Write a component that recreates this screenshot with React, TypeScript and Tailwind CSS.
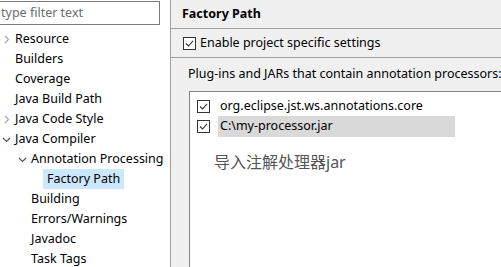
import React from "react";

const font = { fontFamily: '"Noto Sans", "Noto Sans CJK SC", sans-serif' };

function Check() {
  return (
    <svg width="13" height="13" viewBox="0 0 13 13" className="shrink-0">
      <rect x="0.5" y="0.5" width="12" height="12" fill="#fff" stroke="#333" />
      <path d="M3 6.5 L5.5 9 L10 3.8" fill="none" stroke="#333" strokeWidth="1.1" />
    </svg>
  );
}

function Chevron({ down }: { down?: boolean }) {
  return down ? (
    <svg width="9" height="9" viewBox="0 0 9 9" className="shrink-0">
      <path d="M1 3 L4.5 6.5 L8 3" fill="none" stroke="#555" strokeWidth="1.2" />
    </svg>
  ) : (
    <svg width="9" height="9" viewBox="0 0 9 9" className="shrink-0">
      <path d="M3 1 L6.5 4.5 L3 8" fill="none" stroke="#a6a6a6" strokeWidth="1.2" />
    </svg>
  );
}

type Item = { label: string; level: number; chevron?: "right" | "down"; selected?: boolean };

const items: Item[] = [
  { label: "Resource", level: 0, chevron: "right" },
  { label: "Builders", level: 0 },
  { label: "Coverage", level: 0 },
  { label: "Java Build Path", level: 0 },
  { label: "Java Code Style", level: 0, chevron: "right" },
  { label: "Java Compiler", level: 0, chevron: "down" },
  { label: "Annotation Processing", level: 1, chevron: "down" },
  { label: "Factory Path", level: 2, selected: true },
  { label: "Building", level: 1 },
  { label: "Errors/Warnings", level: 1 },
  { label: "Javadoc", level: 1 },
  { label: "Task Tags", level: 1 },
];

export default function App() {
  return (
    <div className="flex w-[501px] h-[267px] overflow-hidden text-[12.5px] text-black" style={font}>
      <div className="w-[171px] shrink-0 bg-white border-r border-[#a0a0a0] overflow-hidden">
        <div className="mt-[1px] -ml-[6px] w-[166px] h-[24px] border border-[#7a7a7a] flex items-center pl-[6px] text-[#6d6d6d]">
          type filter text
        </div>
        <div className="mt-[4px]">
          {items.map((it) => (
            <div
              key={it.label}
              className="h-[20px] flex items-center whitespace-nowrap"
              style={{ paddingLeft: 2 + it.level * 16 }}
            >
              <div className="w-[13px] flex items-center">
                {it.chevron === "right" && <Chevron />}
                {it.chevron === "down" && <Chevron down />}
              </div>
              {it.selected ? (
                <span className="bg-[#cce8ff] h-[20px] flex items-center px-[4px] -ml-[4px]">{it.label}</span>
              ) : (
                <span>{it.label}</span>
              )}
            </div>
          ))}
        </div>
      </div>
      <div className="flex-1 bg-[#f0f0f0] flex flex-col overflow-hidden">
        <div className="h-[29px] flex items-center pl-[11px] font-bold border-b border-[#a0a0a0]">Factory Path</div>
        <div className="h-[29px] flex items-center pl-[12px] gap-[4px] border-b border-[#a0a0a0] whitespace-nowrap">
          <Check />
          <span>Enable project specific settings</span>
        </div>
        <div className="h-[33px] flex items-center pl-[17px] whitespace-nowrap">
          Plug-ins and JARs that contain annotation processors:
        </div>
        <div className="ml-[18px] flex-1 bg-white border-l border-t border-[#828790] pt-[4px] pl-[7px]">
          <div className="h-[20px] flex items-center gap-[10px] whitespace-nowrap">
            <Check />
            <span>org.eclipse.jst.ws.annotations.core</span>
          </div>
          <div className="h-[21px] flex items-center gap-[8px] whitespace-nowrap">
            <Check />
            <span className="bg-[#d9d9d9] h-[21px] w-[237px] flex items-center pl-[2px]">C:\my-processor.jar</span>
          </div>
          <div className="mt-[13px] pl-[17px] text-[16px] text-[#555]">导入注解处理器jar</div>
        </div>
      </div>
    </div>
  );
}
